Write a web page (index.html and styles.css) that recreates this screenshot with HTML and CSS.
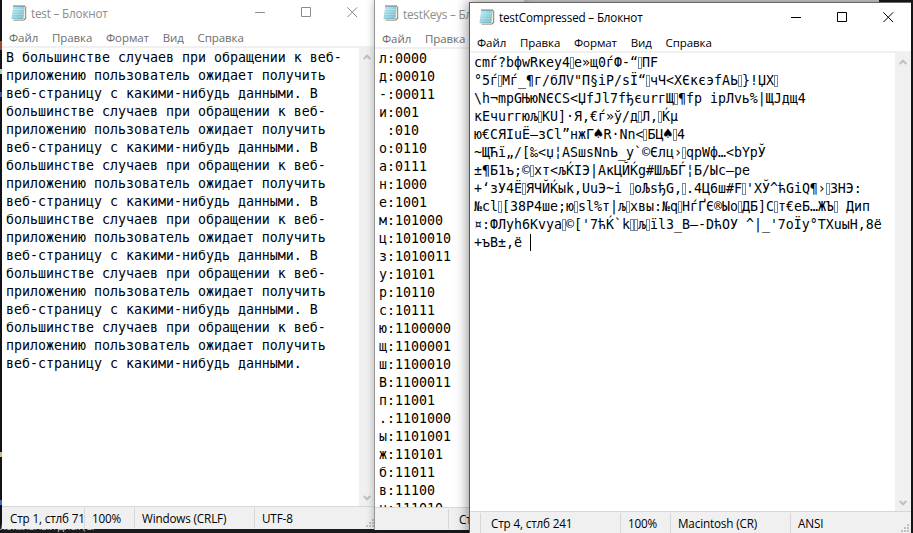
FILE: index.html
```
<!DOCTYPE html>
<html lang="ru">
<head>
<meta charset="utf-8">
<title>Блокнот</title>
<link rel="stylesheet" href="styles.css">
</head>
<body>
<svg class="defs" width="0" height="0">
  <defs>
    <linearGradient id="page" x1="0" y1="0" x2="1" y2="1"><stop offset="0" stop-color="#c9eef6"/><stop offset=".5" stop-color="#8fd0df"/><stop offset="1" stop-color="#65acc2"/></linearGradient>
    <symbol id="notepad" viewBox="0 0 16 17">
      <path d="M3 2.5H15.2V14.5L13 16.5H2.5z" fill="#806f49"/>
      <path d="M2.4 2H14.3V14L12.5 15.8H.8z" fill="#f2eddc"/>
      <path d="M2.2 2H13.6L12.3 14.9H.5z" fill="url(#page)"/>
      <path d="M2 5.5H13M1.8 8H12.8M1.5 10.5H12.5M1.3 13H12.2" stroke="#d2f0f5" stroke-width=".5"/>
      <path d="M3 1V3M5 1V3M7 1V3M9 1V3M11 1V3M13 1V3" stroke="#596a70" stroke-width=".9"/>
    </symbol>
    <symbol id="min" viewBox="0 0 11 11"><path d="M0 5.5H10" stroke="currentColor"/></symbol>
    <symbol id="max" viewBox="0 0 11 11"><path d="M.5 .5H9.5V9.5H.5z" fill="none" stroke="currentColor"/></symbol>
    <symbol id="close" viewBox="0 0 11 11"><path d="M.3 .3L10.2 10.2M10.2 .3L.3 10.2" stroke="currentColor"/></symbol>
    <symbol id="up" viewBox="0 0 8 6"><path d="M.7 5L4 1.7L7.3 5" fill="none" stroke="#bfbfbf" stroke-width="2"/></symbol>
    <symbol id="down" viewBox="0 0 8 6"><path d="M.7 1L4 4.3L7.3 1" fill="none" stroke="#bfbfbf" stroke-width="2"/></symbol>
    <symbol id="grip" viewBox="0 0 8 8"><path d="M6 0h2v2H6zM3 3h2v2H3zM6 3h2v2H6zM0 6h2v2H0zM3 6h2v2H3zM6 6h2v2H6z" fill="#bfbfbf"/></symbol>
  </defs>
</svg>
<div class="desktop">
  <div class="under"></div>
  <div class="strip"><i class="a"></i><i class="b"></i><i class="c"></i><i class="d"></i><i class="e"></i></div>
  <span class="peek">локальный диск (C:</span>

  <section class="window w1">
    <header class="bar"><svg class="icon"><use href="#notepad"/></svg><span class="title">test – Блокнот</span>
      <span class="controls"><svg><use href="#min"/></svg><svg><use href="#max"/></svg><svg><use href="#close"/></svg></span></header>
    <nav class="menu"><span>Файл</span><span>Правка</span><span>Формат</span><span>Вид</span><span>Справка</span></nav>
    <div class="body">
<pre class="text">В большинстве случаев при обращении к веб-
приложению пользователь ожидает получить
веб-страницу с какими-нибудь данными. В
большинстве случаев при обращении к веб-
приложению пользователь ожидает получить
веб-страницу с какими-нибудь данными. В
большинстве случаев при обращении к веб-
приложению пользователь ожидает получить
веб-страницу с какими-нибудь данными. В
большинстве случаев при обращении к веб-
приложению пользователь ожидает получить
веб-страницу с какими-нибудь данными. В
большинстве случаев при обращении к веб-
приложению пользователь ожидает получить
веб-страницу с какими-нибудь данными. В
большинстве случаев при обращении к веб-
приложению пользователь ожидает получить
веб-страницу с какими-нибудь данными.</pre>
      <div class="scroll"><svg><use href="#up"/></svg><svg><use href="#down"/></svg></div>
    </div>
    <footer class="status"><span class="pos">Стр 1, стлб 71</span><span class="zoom">100%</span><span class="eol">Windows (CRLF)</span><span class="enc">UTF-8</span><svg class="grip"><use href="#grip"/></svg></footer>
  </section>

  <section class="window w2">
    <header class="bar"><svg class="icon"><use href="#notepad"/></svg><span class="title">testKeys – Блокнот</span></header>
    <nav class="menu"><span>Файл</span><span>Правка</span><span>Формат</span></nav>
    <div class="body">
<pre class="text">л:0000
д:00010
-:00011
и:001
 :010
о:0110
а:0111
н:1000
е:1001
м:101000
ц:1010010
з:1010011
у:10101
р:10110
с:10111
ю:1100000
щ:1100001
ш:1100010
В:1100011
п:11001
.:1101000
ы:1101001
ж:110101
б:11011
в:11100
ч:111010</pre>
    </div>
    <footer class="status"><span class="lead"></span><span class="pos">Стр 1</span></footer>
  </section>

  <section class="window w3">
    <header class="bar"><svg class="icon"><use href="#notepad"/></svg><span class="title">testCompressed – Блокнот</span>
      <span class="controls"><svg><use href="#min"/></svg><svg><use href="#max"/></svg><svg><use href="#close"/></svg></span></header>
    <nav class="menu"><span>Файл</span><span>Правка</span><span>Формат</span><span>Вид</span><span>Справка</span></nav>
    <div class="body">
<pre class="text">cmѓ?bфwRкеу4<i></i>е»щ0ѓФ-“<i></i>ПF
°5ѓ<i></i>Мѓ_¶г/бЛV"П§iP/sЇ“<i></i>чЧ&lt;ХЄкєэfАЬ<i></i>}!ЏХ<i></i>
\h¬mpGЊюNЄCS&lt;ЏfJl7fђєurгЩ<i></i>¶fp ipЛvь%|ЩJдщ4
кЕчurгюљ<i></i>KU]·Я,€ѓ»ў/д<i></i>Л,<i></i>Ќµ
ю€СЯІuЁ—зСl”нжГ<b>♠</b>R·Nn&lt;<i></i>БЦ<b>♠</b><i></i>4
~ЩЋї„/[‰&lt;џ¦АSшsNnЬ_y`©Єлц›<i></i>qpWф…&lt;bYpЎ
±¶Б1ъ;©<i></i>хт&lt;љЌІЭ|АкЦЙЌg#ШљБЃ¦Б/Ыс—ре
+‘зУ4Ё<i></i>ЯЧЙЌыk,UuЭ~i <i></i>оЉsђG,<i></i>.4Ц6ш#F<i></i>'ХЎ^ћGiQ¶›<i></i>3НЭ:
№сl<i></i>[38Р4ше;ю<i></i>sl%т|љ<i></i>хвы:№q<i></i>НѓҐЄ®Ыо<i></i>ДБ]С<i></i>т€еБ…ЖЪ<i></i> Дип
¤:ФЛуh6Kvуа<i></i>©['7ћЌ`k<i></i><i></i>љ<i></i>їl3_В—-DћОУ ^|_'7оЇу°ТХuыН,8ё
+ъВ±,ё <em></em></pre>
      <div class="scroll"><svg><use href="#up"/></svg><svg><use href="#down"/></svg></div>
    </div>
    <footer class="status"><span class="lead"></span><span class="pos">Стр 4, стлб 241</span><span class="zoom">100%</span><span class="eol">Macintosh (CR)</span><span class="enc">ANSI</span><svg class="grip"><use href="#grip"/></svg></footer>
  </section>
</div>
</body>
</html>
```
FILE: styles.css
```
* { box-sizing: border-box; }
body { margin: 0; font-family: "Open Sans", "Noto Sans", sans-serif; font-size: 11.7px; color: #000; }
.defs { position: absolute; }
.desktop { position: relative; width: 913px; height: 533px; overflow: hidden; background: #1b1c1e; }
.under { position: absolute; left: 376px; top: 0; width: 503px; height: 4px; background: #dedede; }
.strip { position: absolute; left: 0; top: 0; width: 2px; height: 533px; background: #141219; }
.strip i { position: absolute; left: 0; width: 2px; height: 5px; background: #a8d8bb; }
.strip .a { top: 41px; height: 9px; background: #9a4a20; }
.strip .b { top: 69px; }
.strip .c { top: 92px; background: #43518f; }
.strip .d { top: 452px; background: #cbb98a; }
.strip .e { top: 500px; background: #456cb5; }
.peek { position: absolute; left: 0; top: 518px; font-size: 11px; line-height: 16px; letter-spacing: -.5px; color: #d0d0d0; }
.window { position: absolute; display: flex; flex-direction: column; background: #fff; }
.w1 { left: 2px; top: 0; width: 373px; height: 529px; }
.w2 { left: 374px; top: 0; width: 150px; height: 530px; border-left: 1px solid #969696; box-shadow: 0 0 8px rgba(0,0,0,.28); }
.w3 { left: 469px; top: 2px; width: 442px; height: 536px; border-left: 1px solid #555; border-top: 1px solid #666; box-shadow: 0 0 12px 1px rgba(0,0,0,.45); }
.bar { display: flex; align-items: center; flex: none; height: 26px; padding-left: 9px; color: #8c8c8c; white-space: nowrap; }
.title { letter-spacing: -.18px; }
.w2 .bar { height: 27px; padding-left: 8px; }
.w3 .bar { height: 28px; color: #000; }
.icon { width: 16px; height: 17px; margin-right: 4px; flex: none; position: relative; top: -1px; }
.controls { display: flex; gap: 35px; margin-left: auto; padding-right: 17px; }
.controls svg { width: 11px; height: 11px; display: block; position: relative; top: -1px; }
.w3 .controls svg { top: 0; }
.menu { display: flex; align-items: center; flex: none; height: 22px; padding: 2px 0 0 7px; gap: 13.8px; font-size: 11.5px; letter-spacing: -.08px; color: #6d6d6d; border-bottom: 2px solid #f0f0f0; white-space: nowrap; }
.w3 .menu { color: #000; }
.body { display: flex; flex: 1; min-height: 0; overflow: hidden; }
.text { flex: 1; margin: 0; padding: 1px 0 0 4px; font: 13.29px/18px "DejaVu Sans Mono", monospace; white-space: pre; overflow: hidden; }
.text i { display: inline-block; width: 4px; height: 12px; border: 1px solid #6d86a5; border-right-color: #a58162; vertical-align: -2px; }
.text b { display: inline-block; width: 9.5px; font-size: 16px; line-height: 14px; text-indent: -.5px; }
.text em { display: inline-block; width: 1px; height: 17px; background: #000; vertical-align: -4px; }
.scroll { flex: none; width: 16px; display: flex; flex-direction: column; justify-content: space-between; align-items: center; padding: 6px 0 5px; background: #f0f0f0; }
.scroll svg { width: 8px; height: 6px; }
.status { position: relative; display: flex; flex: none; height: 23px; background: #f0f0f0; border-top: 1px solid #d7d7d7; white-space: nowrap; }
.status span { height: 20px; margin-top: 1px; padding-left: 8px; line-height: 21px; letter-spacing: -.15px; border-right: 1px solid #d7d7d7; overflow: hidden; }
.status .enc { border: 0; padding-left: 7px; }
.w1 .pos { width: 83px; }
.w1 .zoom { width: 50px; padding-left: 7px; }
.w1 .eol { width: 120px; padding-left: 7px; }
.w2 .lead { width: 74px; padding: 0; }
.w2 .pos { padding-left: 10px; border: 0; }
.w3 .status { height: 27px; }
.w3 .status span { height: 26px; }
.w3 .lead { width: 11px; padding: 0; }
.w3 .pos { width: 140px; padding-left: 10px; }
.w3 .zoom { width: 50px; padding-left: 7px; }
.w3 .eol { width: 120px; padding-left: 7px; }
.status .grip { position: absolute; right: 1px; bottom: 2px; width: 8px; height: 8px; }
.w3 .grip { right: 2px; bottom: 6px; }
```
